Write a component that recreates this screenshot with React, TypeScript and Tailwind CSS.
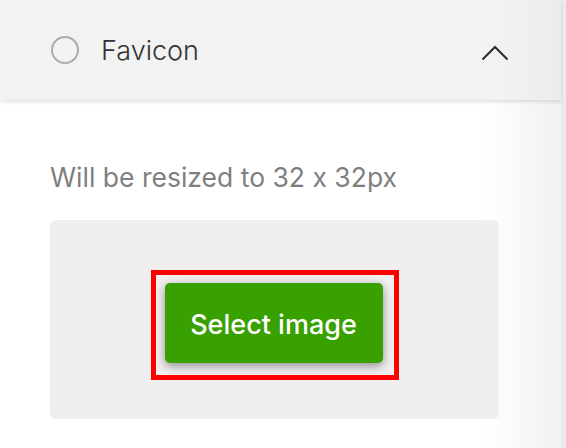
export default function App() {
  return (
    <div className="flex h-[448px] w-[566px] overflow-hidden bg-white font-['Inter',sans-serif] [font-feature-settings:'calt'_0]">
      <div className="flex flex-1 flex-col bg-[linear-gradient(to_right,#ffffff_86%,#f1f1f1)]">
        {/* Cabeçalho */}
        <div className="relative z-10 flex h-[100px] items-center bg-[linear-gradient(to_right,#f2f2f2_88%,#ececec)] pl-[51px] pr-[52px] shadow-[0_2px_4px_rgba(0,0,0,0.12)]">
          <div className="h-[28px] w-[28px] rounded-full border-2 border-[#a9ada8]" />
          <span className="ml-[22px] text-[27px] font-light leading-none text-[#333]">Favicon</span>
          <svg className="ml-auto mt-[6px]" width="28" height="16" viewBox="0 0 28 16" fill="none">
            <path d="M1.5 14.5 L14 2 L26.5 14.5" stroke="#2b2b2b" strokeWidth="2" />
          </svg>
        </div>

        {/* Conteúdo */}
        <div className="flex flex-col px-[50px] pt-[60px]">
          <p className="text-[26.5px] leading-[34px] text-[#7f7f7f]">Will be resized to 32 x 32px</p>
          <div className="mt-[26px] flex w-[449px] justify-center rounded-[6px] bg-[#f0eeef] pb-[39px] pt-[50px]">
            <div className="border-[5px] border-[#ff0000] pb-[12px] pl-[9px] pr-[11px] pt-[8px]">
              <button className="flex h-[80px] w-[218px] items-center justify-center rounded-[5px] bg-[#38a100] pt-[4px] text-[27px] font-medium text-white shadow-[0_3px_10px_rgba(0,0,0,0.4)]">
                Select image
              </button>
            </div>
          </div>
        </div>
      </div>
      <div className="w-[5px] bg-[#ebebeb]" />
    </div>
  );
}
